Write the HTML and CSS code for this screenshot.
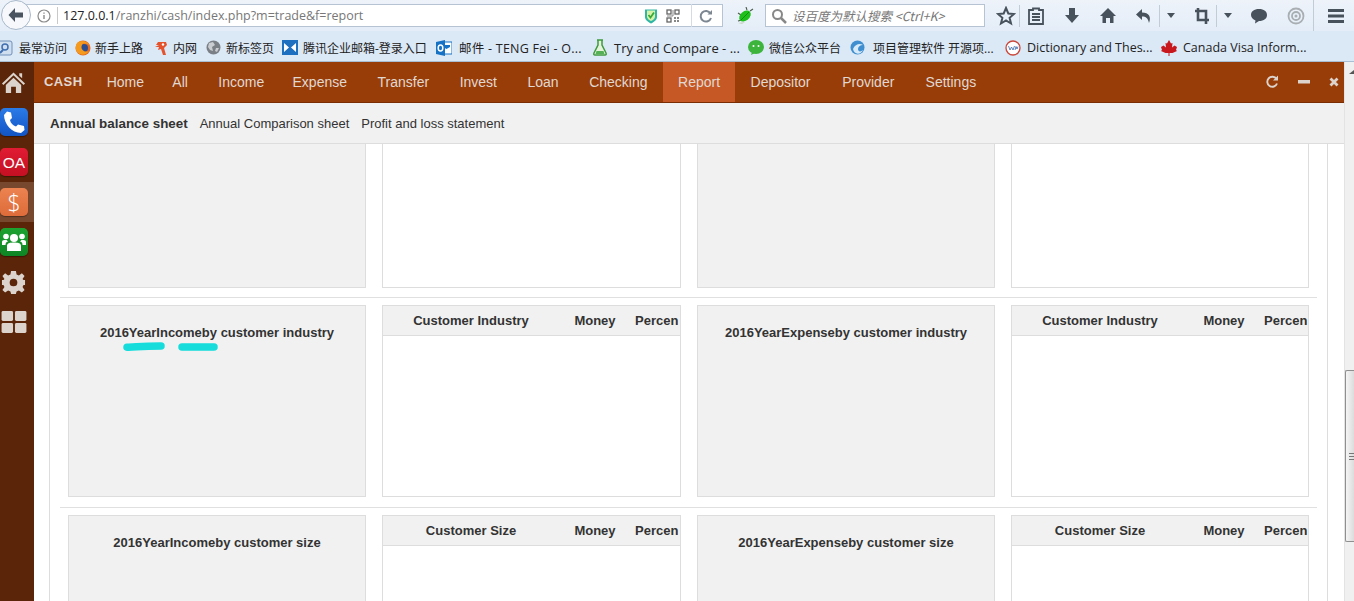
FILE: index.html
```html
<!DOCTYPE html>
<html lang="en">
<head>
<meta charset="utf-8">
<title>Report</title>
<link rel="stylesheet" href="styles.css">
</head>
<body>
<div class="browser">
  <div class="toolbar">
    <div class="back"><svg width="20" height="20" viewBox="0 0 20 20"><path d="M9 3 2.500 10 9 17V12.500H17V7.500H9Z" fill="#4a5460"/></svg></div>
    <div class="urlbar">
      <svg class="info" width="16" height="16" viewBox="0 0 16 16"><circle cx="8" cy="8" r="6" fill="none" stroke="#8a8a8a" stroke-width="1.200"/><path d="M8 7v4M8 4.500v1.300" stroke="#8a8a8a" stroke-width="1.400"/></svg>
      <span class="urlsep"></span>
      <span class="url"><b>127.0.0.1</b>/ranzhi/cash/index.php?m=trade&amp;f=report</span>
      <svg class="shield" width="14" height="16" viewBox="0 0 14 16"><path d="M1 1.500H13V9C13 12 10 14 7 15.500 4 14 1 12 1 9Z" fill="#2fb6a4"/><path d="M3 2.500H11V8.500C11 10.500 9 12 7 13 5 12 3 10.500 3 8.500Z" fill="#d7f2a8"/><path d="M4.500 7 6.500 9.500 10 4.500" fill="none" stroke="#38a838" stroke-width="1.800"/></svg>
      <svg class="qr" width="14" height="14" viewBox="0 0 14 14"><g fill="none" stroke="#666" stroke-width="1.300"><rect x="1" y="1" width="4" height="4"/><rect x="9" y="1" width="4" height="4"/><rect x="1" y="9" width="4" height="4"/></g><path d="M8 8h2v2H8zM11 8h2v2h-2zM8 11h2v2H8zM11 11h2v2h-2zM6.500 1h1v6h-1zM1 6.500h6v1H1z" fill="#888"/></svg>
      <span class="urlsep2"></span>
      <svg class="reload" width="16" height="16" viewBox="0 0 16 16"><path d="M12.500 5.500A5.300 5.300 0 1 0 13 10" fill="none" stroke="#7d8791" stroke-width="2"/><path d="M9.500 6.500H14V2Z" fill="#7d8791"/></svg>
    </div>
    <svg class="bug" width="18" height="18" viewBox="0 0 18 18"><path d="M5 8 2 6M6 13 2 14M11 3 10 0M14 4 17 2" stroke="#4a5a4a" stroke-width="1.100"/><ellipse cx="9" cy="9" rx="6.500" ry="4.500" transform="rotate(-40 9 9)" fill="#1fc01c"/><path d="M5 13 13 5" stroke="#0f8f10" stroke-width="1"/><path d="M2 16 9 15 6 17Z" fill="#c8d4c0"/></svg>
    <div class="searchbar">
      <svg width="16" height="16" viewBox="0 0 16 16"><circle cx="6.500" cy="6.500" r="4.500" fill="none" stroke="#888" stroke-width="2"/><path d="M10 10 15 15" stroke="#888" stroke-width="2.500"/></svg>
      <span class="search-text">设百度为默认搜索 &lt;Ctrl+K&gt;</span>
    </div>
    <div class="tools">
      <svg class="t-star" width="20" height="20" viewBox="0 0 20 20"><path d="M10 2 12.300 7.500 18 8 13.600 11.800 15 17.500 10 14.500 5 17.500 6.400 11.800 2 8 7.700 7.500Z" fill="none" stroke="#48525c" stroke-width="2"/></svg>
      <span class="t-sep"></span>
      <svg class="t-clip" width="16" height="18" viewBox="0 0 16 18"><path d="M5 3V1.500H11V3H15V17H1V3Z" fill="none" stroke="#48525c" stroke-width="1.800"/><path d="M4 7H12M4 10H12M4 13H12" stroke="#48525c" stroke-width="1.800"/></svg>
      <svg class="t-down" width="16" height="18" viewBox="0 0 16 18"><path d="M5 1H11V8H15L8 16 1 8H5Z" fill="#48525c"/></svg>
      <svg class="t-home" width="18" height="18" viewBox="0 0 18 18"><path d="M9 1 17 9H14.500V16H11V11H7V16H3.500V9H1Z" fill="#48525c"/></svg>
      <svg class="t-undo" width="18" height="16" viewBox="0 0 18 16"><path d="M7 1 1 6.500 7 12V8.500C11 8.500 13 10 14 15 16.500 9 14 4.500 7 4.500Z" fill="#48525c"/></svg>
      <span class="t-sep t-sep-b"></span>
      <svg class="t-caret" width="8" height="5" viewBox="0 0 8 5"><path d="M0 0H8L4 5Z" fill="#48525c"/></svg>
      <svg class="t-crop" width="16" height="18" viewBox="0 0 16 18"><path d="M4 1V13H15M1 4H12V17" fill="none" stroke="#48525c" stroke-width="2.600"/></svg>
      <span class="t-sep t-sep-c"></span>
      <svg class="t-caret" width="8" height="5" viewBox="0 0 8 5"><path d="M0 0H8L4 5Z" fill="#48525c"/></svg>
      <svg class="t-chat" width="18" height="16" viewBox="0 0 18 16"><path d="M9 1C14 1 17 3.500 17 7S14 13 9 13L5 15.500 5.500 12.500C3 11.500 1 9.500 1 7 1 3.500 4 1 9 1Z" fill="#48525c"/></svg>
      <svg class="t-target" width="18" height="18" viewBox="0 0 18 18"><circle cx="9" cy="9" r="7.500" fill="none" stroke="#a9aeb3" stroke-width="1.800"/><circle cx="9" cy="9" r="4" fill="none" stroke="#a9aeb3" stroke-width="1.800"/><circle cx="9" cy="9" r="1.500" fill="#a9aeb3"/></svg>
      <span class="t-sep t-sep-d"></span>
      <svg class="t-menu" width="16" height="14" viewBox="0 0 16 14"><path d="M0 0H16V3H0ZM0 5.500H16V8.500H0ZM0 11H16V14H0Z" fill="#48525c"/></svg>
    </div>
  </div>
  <div class="bookmarks">
    <span class="bm bm-0 bm-cjk"><svg width="13" height="16" viewBox="0 0 13 16"><rect x="-4" y="1" width="16" height="14" rx="2" fill="#cfdff0" stroke="#6f90b8"/><circle cx="5" cy="7" r="3" fill="none" stroke="#3f6fb0" stroke-width="1.500"/><path d="M3 10 0 13" stroke="#3f6fb0" stroke-width="2"/></svg>最常访问</span>
    <span class="bm bm-1 bm-cjk"><svg width="16" height="16" viewBox="0 0 16 16"><circle cx="8" cy="8" r="7.500" fill="#e66a1f"/><circle cx="9" cy="8" r="4" fill="#2c4f94"/><path d="M2 3C5 0 12 0 15 6 12 3 8 3 7 5 5 9 9 13 14 11 11 16 3 16 1 10 0 7 1 5 2 3Z" fill="#f39a1f"/></svg>新手上路</span>
    <span class="bm bm-2 bm-cjk"><svg width="15" height="16" viewBox="0 0 15 16"><path d="M4 2H12L13 5 10 8 12 15H9L7 9 4 10 5 7H1L5 5H2Z" fill="#e4532e"/><circle cx="9" cy="4.500" r="1.200" fill="#fff"/></svg>内网</span>
    <span class="bm bm-3 bm-cjk"><svg width="15" height="15" viewBox="0 0 15 15"><circle cx="7.500" cy="7.500" r="7" fill="#7a7f85"/><path d="M3 3 7 2 9 5 6 7 7 11 4 10 2 7ZM10 8H13L11 12 9 11Z" fill="#c9cdd1"/></svg>新标签页</span>
    <span class="bm bm-4 bm-cjk"><svg width="16" height="15" viewBox="0 0 16 15"><rect width="16" height="15" fill="#1d6fc0"/><path d="M2 3 7 7.500 2 12ZM14 3 9 7.500 14 12Z" fill="#fff"/></svg>腾讯企业邮箱-登录入口</span>
    <span class="bm bm-5"><svg width="16" height="16" viewBox="0 0 16 16"><rect x="5" y="2" width="11" height="12" fill="#fff" stroke="#1672c4"/><path d="M7 5H14V7L10.500 9 7 7Z" fill="#1672c4"/><path d="M0 2 9 0V16L0 14Z" fill="#1672c4"/><ellipse cx="4.500" cy="8" rx="2.300" ry="3" fill="none" stroke="#fff" stroke-width="1.500"/></svg>邮件 - TENG Fei - O...</span>
    <span class="bm bm-6"><svg width="14" height="17" viewBox="0 0 14 17"><path d="M5 1V6L1 14C.5 15.500 1 16 2 16H12C13 16 13.500 15.500 13 14L9 6V1M4 1H10" fill="#e4f3d9" stroke="#3f9a3f" stroke-width="1.500"/><path d="M3.500 12H10.500L11.500 15H2.500Z" fill="#54b054"/></svg>Try and Compare - ...</span>
    <span class="bm bm-7 bm-cjk"><svg width="16" height="15" viewBox="0 0 16 15"><ellipse cx="8" cy="7" rx="8" ry="7" fill="#3db53d"/><path d="M4 12 3 15 7 13Z" fill="#3db53d"/><circle cx="5.500" cy="6" r="1" fill="#fff"/><circle cx="10.500" cy="6" r="1" fill="#fff"/></svg>微信公众平台</span>
    <span class="bm bm-8 bm-cjk"><svg width="15" height="15" viewBox="0 0 15 15"><circle cx="7.500" cy="7.500" r="7" fill="#3f8fd0"/><path d="M3 9C5 4 10 3 13 5 10 5 8 7 8 9 8 12 11 12 13 10 11 15 4 15 3 9Z" fill="#d5e9f8"/></svg>项目管理软件 开源项...</span>
    <span class="bm bm-9"><svg width="16" height="16" viewBox="0 0 16 16"><circle cx="8" cy="8" r="7" fill="#fff" stroke="#c9463a" stroke-width="1.300"/><path d="M3.500 6 5 10 6.500 7 8 10 9.500 6M10 10 11 6.500 12 9 13 6.500" fill="none" stroke="#3a6aa8" stroke-width=".8"/></svg>Dictionary and Thes...</span>
    <span class="bm bm-10"><svg width="16" height="16" viewBox="0 0 16 16"><path d="M8 0 10 3.500 11.500 3 11 7.500 13.500 5.500 16 7 15 10 16 11 11.500 13 8.500 13V16H7.500V13L4.500 13 0 11 1 10 0 7 2.500 5.500 5 7.500 4.500 3 6 3.500Z" fill="#c8171d"/></svg>Canada Visa Inform...</span>
  </div>
</div>

<div class="app">
  <aside class="dock">
    <div class="dock-item"><svg width="25" height="23" viewBox="0 0 26 23"><path d="M13 1 25 12.500 23.500 14 13 4 2.500 14 1 12.500ZM19 2H22V7L19 4.500ZM5 14 13 6.500 21 14V22.500H15.500V16H10.500V22.500H5Z" fill="#dcd3cc"/></svg></div>
    <div class="dock-item dock-tile"><div class="tile tile-blue"><svg width="24" height="24" viewBox="0 0 24 24"><path d="M5 1.500 9 2.500 10 8 8 10C8.500 13 11 15.500 14 16.500L16 14.500 22 16 22.500 20 19 23C10 23 2 14 2 5Z" fill="#fff"/></svg></div></div>
    <div class="dock-item dock-tile"><div class="tile tile-red">OA</div></div>
    <div class="dock-item dock-tile dock-active"><div class="tile tile-orange">$</div></div>
    <div class="dock-item dock-tile"><div class="tile tile-green"><svg width="24" height="20" viewBox="0 0 24 20"><circle cx="12" cy="6" r="4" fill="#fff"/><circle cx="4" cy="4.500" r="2.800" fill="#fff"/><circle cx="20" cy="4.500" r="2.800" fill="#fff"/><path d="M5 19V14C5 11 8 10.500 12 10.500S19 11 19 14V19ZM0 13V10C0 8 2 8 4.500 8L6 9.500C4 10 3.500 11 3.500 13ZM24 13V10C24 8 22 8 19.500 8L18 9.500C20 10 20.500 11 20.500 13Z" fill="#fff"/></svg></div></div>
    <div class="dock-item"><svg width="25" height="25" viewBox="0 0 26 26"><path d="M10.500 1H15.500L16.200 4.600 18.600 5.600 21.700 3.500 24.500 6.300 22.400 9.400 23.400 10.500 25 10.500V15.500L23.400 15.500 22.400 17.600 24.500 20.700 21.700 23.500 18.600 21.400 16.200 22.400 15.500 25H10.500L9.800 22.400 7.400 21.400 4.300 23.500 1.500 20.700 3.600 17.600 2.600 15.500 1 15.500V10.500L2.600 10.500 3.600 9.400 1.500 6.300 4.300 3.500 7.400 5.600 9.800 4.600ZM13 9A4 4 0 1 0 13 17 4 4 0 0 0 13 9Z" fill="#dcd3cc" fill-rule="evenodd"/></svg></div>
    <div class="dock-item"><svg width="26" height="22" viewBox="0 0 26 23"><rect x="0" y="0" width="12" height="10.500" rx="1.500" fill="#dcd3cc"/><rect x="14" y="0" width="12" height="10.500" rx="1.500" fill="#dcd3cc"/><rect x="0" y="12.500" width="12" height="10.500" rx="1.500" fill="#dcd3cc"/><rect x="14" y="12.500" width="12" height="10.500" rx="1.500" fill="#dcd3cc"/></svg></div>
  </aside>

  <div class="viewport">
    <nav class="navbar">
      <span class="brand">CASH</span>
      <a class="nav-link nav-first">Home</a>
      <a class="nav-link">All</a>
      <a class="nav-link nav-income">Income</a>
      <a class="nav-link">Expense</a>
      <a class="nav-link">Transfer</a>
      <a class="nav-link">Invest</a>
      <a class="nav-link">Loan</a>
      <a class="nav-link">Checking</a>
      <a class="nav-link nav-active">Report</a>
      <a class="nav-link nav-depositor">Depositor</a>
      <a class="nav-link nav-provider">Provider</a>
      <a class="nav-link">Settings</a>
      <div class="nav-actions">
        <svg width="14" height="14" viewBox="0 0 14 14"><path d="M11.500 4A5 5 0 1 0 12 8.500" fill="none" stroke="#dcd3cc" stroke-width="1.900"/><path d="M8 5.500H13V.5Z" fill="#dcd3cc"/></svg>
        <svg width="12" height="4" viewBox="0 0 12 4"><rect width="12" height="3.500" fill="#dcd3cc"/></svg>
        <svg width="10" height="10" viewBox="0 0 10 10"><path d="M1.500 1.500 8.500 8.500M8.500 1.500 1.500 8.500" stroke="#dcd3cc" stroke-width="2.800"/></svg>
      </div>
    </nav>
    <div class="subnav">
      <a class="sub-link sub-active">Annual balance sheet</a>
      <a class="sub-link">Annual Comparison sheet</a>
      <a class="sub-link">Profit and loss statement</a>
    </div>
    <main class="content">
      <div class="panel">
        <div class="row row-top">
          <div class="chart-card"></div>
          <div class="table-card"></div>
          <div class="chart-card"></div>
          <div class="table-card"></div>
        </div>
        <div class="row row-mid">
          <div class="chart-card"><h4 class="chart-title">2016YearIncomeby customer industry</h4>
            <svg class="mark" width="100" height="12" viewBox="0 0 100 12"><path d="M8 7.200C16 7.500 20 6 42 6M63 7H95" fill="none" stroke="#16dcdc" stroke-width="7.500" stroke-linecap="round"/></svg>
          </div>
          <div class="table-card">
            <div class="thead"><span class="th th-name">Customer Industry</span><span class="th th-money">Money</span><span class="th th-pct">Percen</span></div>
          </div>
          <div class="chart-card"><h4 class="chart-title">2016YearExpenseby customer industry</h4></div>
          <div class="table-card">
            <div class="thead"><span class="th th-name">Customer Industry</span><span class="th th-money">Money</span><span class="th th-pct">Percen</span></div>
          </div>
        </div>
        <div class="row row-last">
          <div class="chart-card"><h4 class="chart-title">2016YearIncomeby customer size</h4></div>
          <div class="table-card">
            <div class="thead"><span class="th th-name">Customer Size</span><span class="th th-money">Money</span><span class="th th-pct">Percen</span></div>
          </div>
          <div class="chart-card"><h4 class="chart-title">2016YearExpenseby customer size</h4></div>
          <div class="table-card">
            <div class="thead"><span class="th th-name">Customer Size</span><span class="th th-money">Money</span><span class="th th-pct">Percen</span></div>
          </div>
        </div>
      </div>
    </main>
  </div>
  <div class="scrollbar">
    <span class="arrow"></span>
    <div class="thumb"><i></i></div>
  </div>
</div>
</body>
</html>
```
FILE: styles.css
```css
* { box-sizing: border-box; }
html, body { margin: 0; height: 601px; overflow: hidden; }
body {
  display: flex;
  flex-direction: column;
  font-family: "Liberation Sans", Arial, sans-serif;
  font-size: 14px;
  color: #333;
  background: #fff;
}

/* browser chrome */
.browser { flex: none; height: 62px; border-bottom: 1px solid #a9bdd3; }
.toolbar {
  position: relative;
  display: flex;
  align-items: center;
  height: 31px;
  background: linear-gradient(#eef3fa, #e4edf8);
}
.back {
  position: absolute;
  left: 1px;
  top: 0;
  z-index: 1;
  width: 30px;
  height: 30px;
  display: flex;
  align-items: center;
  justify-content: center;
  background: #f6f8fb;
  border: 1px solid #a8b8ca;
  border-radius: 50%;
}
.urlbar {
  display: flex;
  align-items: center;
  margin-left: 24px;
  width: 699px;
  height: 23px;
  background: #fff;
  border: 1px solid #b5c3d3;
}
.info { margin-left: 11px; }
.urlsep { width: 1px; height: 17px; background: #c9c9c9; margin: 0 5px; }
.url {
  font-family: "Open Sans", sans-serif;
  font-size: 12.500px;
  color: #777;
  white-space: nowrap;
  flex: 1;
}
.url b { font-weight: 400; color: #222; }
.shield { margin-right: 8px; }
.qr { margin-right: 11px; }
.urlsep2 { width: 1px; height: 23px; background: #d5dbe2; margin-right: 6px; }
.reload { margin-right: 8px; }
.bug { margin-left: 13px; }
.searchbar {
  display: flex;
  align-items: center;
  gap: 5px;
  margin-left: 11px;
  padding-left: 5px;
  width: 220px;
  height: 23px;
  background: #fff;
  border: 1px solid #b5c3d3;
}
.search-text {
  font-family: "Noto Sans CJK SC", "Open Sans", sans-serif;
  font-size: 12.500px;
  font-style: italic;
  color: #777;
  white-space: nowrap;
}
.tools { display: flex; align-items: center; height: 31px; margin-left: 11px; }
.t-sep { width: 1px; height: 22px; background: #c2ccd6; margin-left: 3px; }
.t-clip { margin-left: 8px; }
.t-down { margin-left: 20px; }
.t-home { margin-left: 19px; }
.t-undo { margin-left: 18px; }
.t-sep-b { margin-left: 6px; }
.t-caret { margin-left: 7px; }
.t-crop { margin-left: 19px; }
.t-sep-c { margin-left: 6px; }
.t-chat { margin-left: 18px; }
.t-target { margin-left: 19px; }
.t-sep-d { height: 31px; margin-left: 8px; }
.t-menu { margin-left: 14px; }

.bookmarks {
  display: flex;
  align-items: center;
  height: 30px;
  padding-top: 3px;
  overflow: hidden;
  background: #dbe8f6;
  font-family: "Open Sans", "Noto Sans CJK SC", sans-serif;
  font-size: 12.500px;
  color: #222;
  white-space: nowrap;
}
.bm { display: inline-flex; align-items: center; gap: 4px; flex: none; }
.bm-cjk { font-size: 12px; }
.bm-0 { width: 75px; gap: 6px; }
.bm-1 { width: 79px; }
.bm-2 { width: 52px; }
.bm-3 { width: 76px; gap: 5px; }
.bm-4 { width: 154px; gap: 5px; }
.bm-5 { width: 157px; gap: 7px; letter-spacing: .25px; }
.bm-6 { width: 155px; gap: 7px; font-size: 13px; }
.bm-7 { width: 102px; gap: 5px; }
.bm-8 { width: 155px; gap: 8px; }
.bm-9 { width: 156px; gap: 6px; }
.bm-10 { gap: 6px; }

/* app shell */
.app { flex: 1; min-height: 0; display: flex; }
.dock { flex: none; width: 34px; background: #5a2508; display: flex; flex-direction: column; }
.dock-item { height: 40px; display: flex; align-items: center; padding-left: 1px; flex: none; }
.dock-tile { padding-left: 0; }
.dock-active { background: #78482e; }
.tile {
  width: 28px;
  height: 28px;
  border-radius: 5px;
  display: flex;
  align-items: center;
  justify-content: center;
  color: #fff;
  font-size: 15.500px;
  box-shadow: 0 1px 1px rgba(0, 0, 0, .35);
}
.tile-blue { background: linear-gradient(#2a7be8, #1254c4); }
.tile-red { background: linear-gradient(#e01c33, #c40f22); padding-top: 1px; }
.tile-orange {
  background: linear-gradient(#ec8350, #de6c3a);
  font-family: "Open Sans", sans-serif;
  font-weight: 300;
  font-size: 23px;
}
.tile-green { background: linear-gradient(#1da330, #0e8524); }

.viewport { flex: 1; min-width: 0; display: flex; flex-direction: column; }
.navbar {
  flex: none;
  display: flex;
  align-items: stretch;
  height: 41px;
  background: #993d08;
  border-bottom: 1px solid #7a2c03;
  color: #e0d8d2;
}
.brand {
  font-size: 13px;
  font-weight: 700;
  letter-spacing: .4px;
  line-height: 40px;
  margin-left: 10px;
  margin-right: 9px;
}
.nav-link { padding: 0 15.250px; line-height: 40px; color: #e0d8d2; }
.nav-first { padding-right: 13px; }
.nav-income { padding-right: 13px; }
.nav-depositor { padding-right: 16.500px; }
.nav-provider { padding-right: 16px; }
.nav-active { background: #c65826; }
.nav-actions {
  margin-left: auto;
  display: flex;
  align-items: center;
  gap: 19px;
  padding-right: 5px;
}
.subnav {
  flex: none;
  display: flex;
  align-items: center;
  gap: 12px;
  height: 41px;
  padding-left: 16px;
  background: #f1f1f1;
  border-bottom: 1px solid #ddd;
  font-size: 13px;
  color: #333;
}
.sub-active { font-size: 13.400px; font-weight: 700; }

.content { flex: 1; min-height: 0; overflow: hidden; padding: 0 16px 0 15px; background: #fff; }
.panel { height: 100%; border: 1px solid #ddd; border-width: 0 1px; padding: 0 10px; overflow: hidden; }
.row {
  display: grid;
  grid-template-columns: 298px 299px 298px 298px;
  gap: 16px;
  padding: 7px 8px 10px;
  border-bottom: 1px solid #e0e0e0;
}
.row-top { padding-top: 0; padding-bottom: 9px; height: 154px; }
.row-mid { height: 210px; }
.row-last { border-bottom: 0; height: 250px; }
.chart-card, .table-card {
  position: relative;
  border: 1px solid #ddd;
  overflow: hidden;
  min-width: 0;
}
.chart-card { background: #f1f1f1; }
.table-card { background: #fff; }
.row-top .chart-card, .row-top .table-card { border-top: 0; }
.chart-title {
  margin: 17px 0 0;
  text-align: center;
  font-size: 13px;
  line-height: 20px;
  font-weight: 700;
  color: #333;
}
.mark { position: absolute; left: 50px; top: 34px; }
.thead {
  display: flex;
  height: 30px;
  line-height: 30px;
  background: #f1f1f1;
  border-bottom: 1px solid #ddd;
  font-size: 13px;
  font-weight: 700;
  white-space: nowrap;
  color: #333;
}
.th { flex: none; text-align: center; }
.th-name { width: 176px; }
.th-money { width: 72px; }
.th-pct { padding-left: 4px; }

.scrollbar {
  position: relative;
  flex: none;
  width: 10px;
  background: #f0f0f0;
  border-left: 1px solid #e3e3e3;
}
.arrow {
  position: absolute;
  left: 4px;
  top: 8px;
  border-style: solid;
  border-width: 0 5px 4px 5px;
  border-color: transparent transparent #555 transparent;
}
.thumb {
  position: absolute;
  left: 0;
  right: -1px;
  top: 308px;
  height: 172px;
  background: linear-gradient(90deg, #f5f5f5, #d9d9d9);
  border: 1px solid #8f8f8f;
  border-right: 0;
  border-radius: 2px 0 0 2px;
}
.thumb i {
  position: absolute;
  left: 3px;
  right: 0;
  top: 82px;
  height: 7px;
  background: repeating-linear-gradient(#777 0 1px, transparent 1px 3px);
}
```
